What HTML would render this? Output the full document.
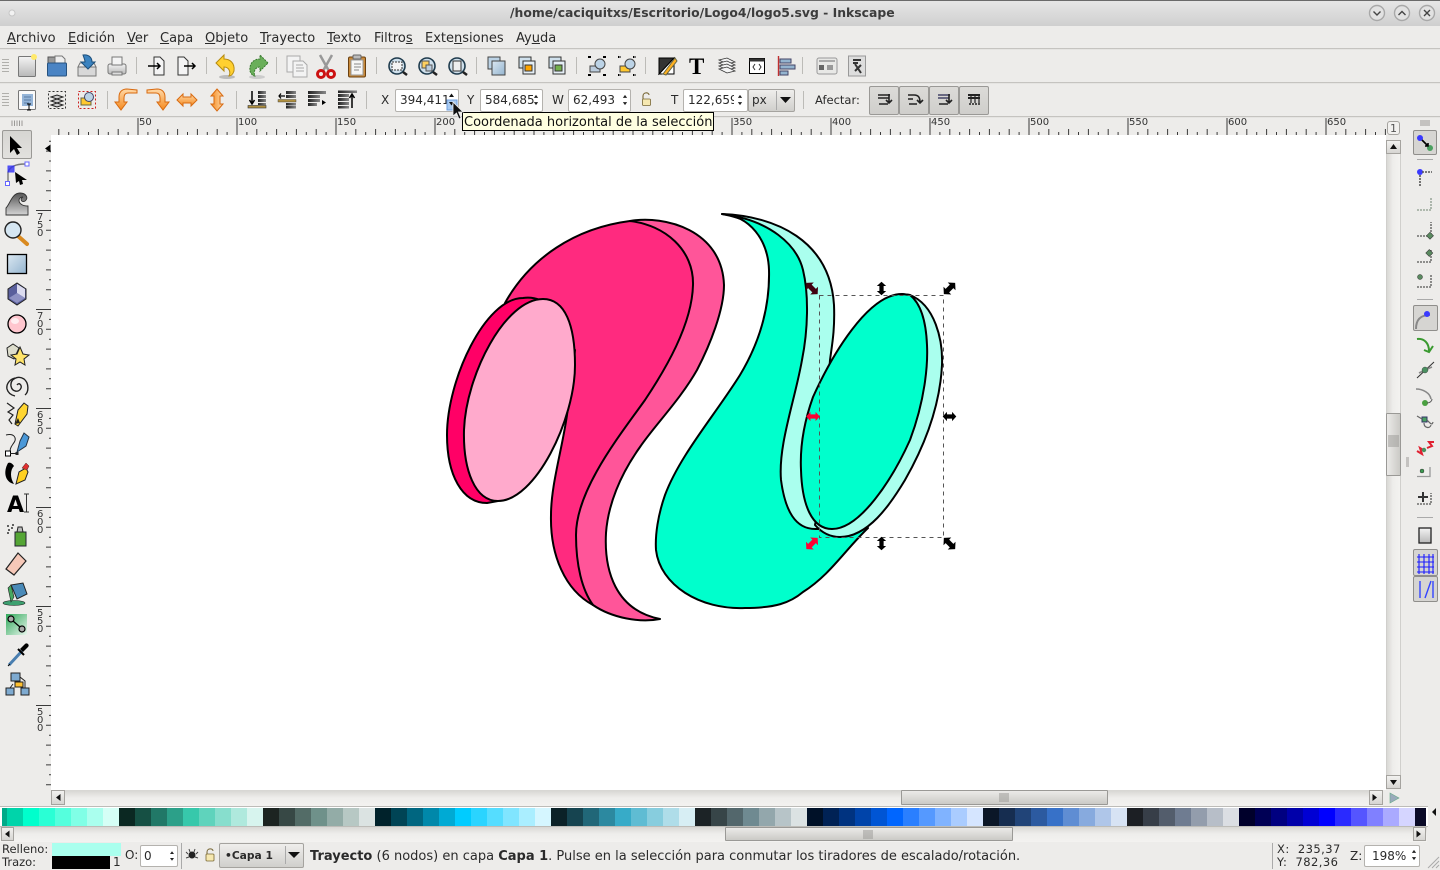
<!DOCTYPE html>
<html><head><meta charset="utf-8"><title>logo5.svg - Inkscape</title>
<style>
html,body{margin:0;padding:0;width:1440px;height:869px;overflow:hidden;background:#edecea;font-family:"DejaVu Sans","Liberation Sans",sans-serif;font-size:13px;color:#2a2a2a}
.a{position:absolute;box-sizing:border-box}
.t{position:absolute;white-space:pre;line-height:16px}
.t u{text-decoration:underline}
.spin{position:absolute;box-sizing:border-box;background:#fff;border:1px solid #b4b2ae;border-radius:2px;height:23px;font-size:12px;line-height:21px;padding-left:4px;overflow:hidden;white-space:pre}
.btn{position:absolute;box-sizing:border-box;border:1px solid #a5a39f;border-radius:2px;background:linear-gradient(#efeeec,#d0cfcc)}
.sb{position:absolute;box-sizing:border-box;background:linear-gradient(#d9d8d5,#eeedeb 45%,#f3f2f0);}
.th{position:absolute;box-sizing:border-box;border:1px solid #9a9996;background:linear-gradient(#ebeae8,#cbcac6);border-radius:1px}
.ar{position:absolute;box-sizing:border-box;border:1px solid #a5a39f;background:linear-gradient(#f2f1ef,#d6d5d2)}
</style></head><body>
<!-- title bar -->
<div class="a" style="left:0;top:0;width:1440px;height:26px;background:linear-gradient(#e6e6e6,#cfcfcf);border-top:1px solid #6a6a6a"></div>
<div class="t" style="left:510px;top:5px;font-weight:bold;font-size:12.4px;color:#3c3c3c">/home/caciquitxs/Escritorio/Logo4/logo5.svg - Inkscape</div>
<!-- menu -->
<div class="t" style="left:7px;top:31px"><u>A</u>rchivo</div>
<div class="t" style="left:68px;top:31px"><u>E</u>dición</div>
<div class="t" style="left:127px;top:31px"><u>V</u>er</div>
<div class="t" style="left:160px;top:31px"><u>C</u>apa</div>
<div class="t" style="left:205px;top:31px"><u>O</u>bjeto</div>
<div class="t" style="left:260px;top:31px"><u>T</u>rayecto</div>
<div class="t" style="left:327px;top:31px"><u>T</u>exto</div>
<div class="t" style="left:374px;top:31px">Filtro<u>s</u></div>
<div class="t" style="left:425px;top:31px">Exte<u>n</u>siones</div>
<div class="t" style="left:516px;top:31px">Ay<u>u</u>da</div>
<!-- bar separators -->
<div class="a" style="left:0;top:48px;width:1440px;height:2px;background:linear-gradient(#b5b3af,#f5f4f2)"></div>
<div class="a" style="left:0;top:82px;width:1440px;height:2px;background:linear-gradient(#b5b3af,#f5f4f2)"></div>
<div class="a" style="left:0;top:116px;width:1440px;height:2px;background:linear-gradient(#b5b3af,#f5f4f2)"></div>
<!-- canvas -->
<div class="a" style="left:51px;top:135px;width:1335px;height:655px;background:#fff"></div>
<!-- scrollbars -->
<div class="sb" style="left:51px;top:790px;width:1332px;height:16px;border-top:1px solid #d8d7d4"></div>
<div class="ar" style="left:51px;top:790px;width:14px;height:15px"></div>
<div class="ar" style="left:1369px;top:790px;width:14px;height:15px"></div>
<div class="th" style="left:901px;top:790px;width:207px;height:15px"></div>
<div class="a" style="left:1386px;top:140px;width:15px;height:648px;background:linear-gradient(90deg,#d9d8d5,#eeedeb 45%,#f3f2f0);border-left:1px solid #d0cfcc;border-right:1px solid #d0cfcc"></div>
<div class="ar" style="left:1386px;top:140px;width:15px;height:14px"></div>
<div class="ar" style="left:1386px;top:775px;width:15px;height:14px"></div>
<div class="th" style="left:1386px;top:413px;width:15px;height:63px;background:linear-gradient(90deg,#ebeae8,#cbcac6)"></div>
<div class="btn" style="left:1387px;top:121px;width:13px;height:14px;border-radius:3px;background:#f2f1ef"></div>
<!-- palette -->
<div class="a" style="left:0;top:806px;width:1428px;height:21px;background:#fff;border-top:1px solid #bdbcb8;border-bottom:1px solid #bdbcb8"></div>
<svg class="a" style="left:0;top:808px" width="1440" height="18" shape-rendering="crispEdges">
<rect x="2" width="5" height="18" fill="#00aa88"/>
<rect x="7" width="16" height="18" fill="#00d4aa"/><rect x="23" width="16" height="18" fill="#00ffcc"/><rect x="39" width="16" height="18" fill="#2affd5"/><rect x="55" width="16" height="18" fill="#55ffdd"/><rect x="71" width="16" height="18" fill="#80ffe6"/><rect x="87" width="16" height="18" fill="#aaffee"/><rect x="103" width="16" height="18" fill="#d5fff6"/>
<rect x="119" width="16" height="18" fill="#0b2822"/><rect x="135" width="16" height="18" fill="#165044"/><rect x="151" width="16" height="18" fill="#217867"/><rect x="167" width="16" height="18" fill="#2ca089"/><rect x="183" width="16" height="18" fill="#37c8ab"/><rect x="199" width="16" height="18" fill="#5fd3bc"/><rect x="215" width="16" height="18" fill="#87decd"/><rect x="231" width="16" height="18" fill="#afe9dd"/><rect x="247" width="16" height="18" fill="#d7f4ee"/>
<rect x="263" width="16" height="18" fill="#1c2421"/><rect x="279" width="16" height="18" fill="#374845"/><rect x="295" width="16" height="18" fill="#536c67"/><rect x="311" width="16" height="18" fill="#6f918a"/><rect x="327" width="16" height="18" fill="#93aca7"/><rect x="343" width="16" height="18" fill="#b7c8c4"/><rect x="359" width="16" height="18" fill="#dbe3e2"/>
<rect x="375" width="16" height="18" fill="#00222b"/><rect x="391" width="16" height="18" fill="#004455"/><rect x="407" width="16" height="18" fill="#006680"/><rect x="423" width="16" height="18" fill="#0088aa"/><rect x="439" width="16" height="18" fill="#00aad4"/><rect x="455" width="16" height="18" fill="#00ccff"/><rect x="471" width="16" height="18" fill="#2ad4ff"/><rect x="487" width="16" height="18" fill="#55ddff"/><rect x="503" width="16" height="18" fill="#80e5ff"/><rect x="519" width="16" height="18" fill="#aaeeff"/><rect x="535" width="16" height="18" fill="#d5f6ff"/>
<rect x="551" width="16" height="18" fill="#0b2228"/><rect x="567" width="16" height="18" fill="#164450"/><rect x="583" width="16" height="18" fill="#216778"/><rect x="599" width="16" height="18" fill="#2c89a0"/><rect x="615" width="16" height="18" fill="#37abc8"/><rect x="631" width="16" height="18" fill="#5fbcd3"/><rect x="647" width="16" height="18" fill="#87cdde"/><rect x="663" width="16" height="18" fill="#afdde9"/><rect x="679" width="16" height="18" fill="#d7eef4"/>
<rect x="695" width="16" height="18" fill="#1c2326"/><rect x="711" width="16" height="18" fill="#374548"/><rect x="727" width="16" height="18" fill="#53676c"/><rect x="743" width="16" height="18" fill="#6f8a91"/><rect x="759" width="16" height="18" fill="#93a7ac"/><rect x="775" width="16" height="18" fill="#b7c4c8"/><rect x="791" width="16" height="18" fill="#dbe2e3"/>
<rect x="807" width="16" height="18" fill="#001128"/><rect x="823" width="16" height="18" fill="#002255"/><rect x="839" width="16" height="18" fill="#003380"/><rect x="855" width="16" height="18" fill="#0044aa"/><rect x="871" width="16" height="18" fill="#0055d4"/><rect x="887" width="16" height="18" fill="#0066ff"/><rect x="903" width="16" height="18" fill="#2a7fff"/><rect x="919" width="16" height="18" fill="#5599ff"/><rect x="935" width="16" height="18" fill="#80b3ff"/><rect x="951" width="16" height="18" fill="#aaccff"/><rect x="967" width="16" height="18" fill="#d5e5ff"/>
<rect x="983" width="16" height="18" fill="#0b1728"/><rect x="999" width="16" height="18" fill="#162d50"/><rect x="1015" width="16" height="18" fill="#214478"/><rect x="1031" width="16" height="18" fill="#2c5aa0"/><rect x="1047" width="16" height="18" fill="#3771c8"/><rect x="1063" width="16" height="18" fill="#5f8dd3"/><rect x="1079" width="16" height="18" fill="#87aade"/><rect x="1095" width="16" height="18" fill="#afc6e9"/><rect x="1111" width="16" height="18" fill="#d7e3f4"/>
<rect x="1127" width="16" height="18" fill="#1c1f24"/><rect x="1143" width="16" height="18" fill="#373e48"/><rect x="1159" width="16" height="18" fill="#535d6c"/><rect x="1175" width="16" height="18" fill="#6f7c91"/><rect x="1191" width="16" height="18" fill="#939dac"/><rect x="1207" width="16" height="18" fill="#b7bec8"/><rect x="1223" width="16" height="18" fill="#dbdee3"/>
<rect x="1239" width="16" height="18" fill="#00002b"/><rect x="1255" width="16" height="18" fill="#000055"/><rect x="1271" width="16" height="18" fill="#000080"/><rect x="1287" width="16" height="18" fill="#0000aa"/><rect x="1303" width="16" height="18" fill="#0000d4"/><rect x="1319" width="16" height="18" fill="#0000ff"/><rect x="1335" width="16" height="18" fill="#2a2aff"/><rect x="1351" width="16" height="18" fill="#5555ff"/><rect x="1367" width="16" height="18" fill="#8080ff"/><rect x="1383" width="16" height="18" fill="#aaaaff"/><rect x="1399" width="16" height="18" fill="#d5d5ff"/>
<rect x="1415" width="11" height="18" fill="#0b0b28"/>
</svg>
<div class="sb" style="left:0;top:827px;width:1427px;height:15px"></div>
<div class="ar" style="left:1px;top:827px;width:13px;height:14px"></div>
<div class="ar" style="left:1413px;top:827px;width:13px;height:14px"></div>
<div class="th" style="left:725px;top:827px;width:288px;height:14px"></div>
<!-- status -->
<div class="t" style="left:2px;top:841px;font-size:11.5px">Relleno:</div>
<div class="t" style="left:2px;top:854px;font-size:11.5px">Trazo:</div>
<div class="a" style="left:52px;top:843px;width:69px;height:13px;background:#aaffee"></div>
<div class="a" style="left:52px;top:856px;width:58px;height:13px;background:#000"></div>
<div class="t" style="left:113px;top:854px;font-size:12px">1</div>
<div class="t" style="left:125px;top:847px;font-size:12px">O:</div>
<div class="spin" style="left:140px;top:845px;width:38px;height:22px;padding-left:3px">0</div>
<div class="a" style="left:181px;top:843px;width:1px;height:26px;background:#aaa"></div>
<div class="btn" style="left:219px;top:843px;width:85px;height:25px"></div>
<div class="a" style="left:285px;top:846px;width:1px;height:18px;background:#aaa"></div>
<div class="t" style="left:225px;top:848px;font-size:10.7px;font-weight:bold">•Capa 1</div>
<div class="t" style="left:310px;top:849px;font-size:13px"><b>Trayecto</b> (6 nodos) en capa <b>Capa 1</b>. Pulse en la selección para conmutar los tiradores de escalado/rotación.</div>
<div class="a" style="left:1272px;top:843px;width:1px;height:26px;background:#aaa"></div>
<div class="t" style="left:1277px;top:841px;font-size:11.5px;letter-spacing:.45px">X:  235,37</div>
<div class="t" style="left:1277px;top:854px;font-size:11.5px;letter-spacing:.45px">Y:  782,36</div>
<div class="t" style="left:1350px;top:848px;font-size:12px">Z:</div>
<div class="spin" style="left:1364px;top:845px;width:56px;height:22px;padding-left:7px">198%</div>
<!-- spin fields bar -->
<div class="t" style="left:381px;top:92px;font-size:12px">X</div>
<div class="spin" style="left:395px;top:89px;width:64px">394,411</div>
<div class="t" style="left:467px;top:92px;font-size:12px">Y</div>
<div class="spin" style="left:480px;top:89px;width:63px">584,685</div>
<div class="t" style="left:552px;top:92px;font-size:12px">W</div>
<div class="spin" style="left:568px;top:89px;width:63px">62,493</div>
<div class="t" style="left:671px;top:92px;font-size:12px">T</div>
<div class="spin" style="left:683px;top:89px;width:65px">122,659</div>
<div class="btn" style="left:748px;top:89px;width:47px;height:23px"></div>
<div class="a" style="left:776px;top:91px;width:1px;height:19px;background:#aaa"></div>
<div class="t" style="left:752px;top:92px;font-size:12px">px</div>
<div class="t" style="left:815px;top:92px;font-size:11.5px">Afectar:</div>
<div class="btn" style="left:869px;top:86px;width:30px;height:29px;background:linear-gradient(#dcdbd8,#cfcecb);border-color:#9a9996"></div>
<div class="btn" style="left:899px;top:86px;width:30px;height:29px;background:linear-gradient(#dcdbd8,#cfcecb);border-color:#9a9996"></div>
<div class="btn" style="left:929px;top:86px;width:30px;height:29px;background:linear-gradient(#dcdbd8,#cfcecb);border-color:#9a9996"></div>
<div class="btn" style="left:959px;top:86px;width:30px;height:29px;background:linear-gradient(#dcdbd8,#cfcecb);border-color:#9a9996"></div>
<!-- toolbox active -->
<div class="btn" style="left:2px;top:130px;width:30px;height:29px;background:linear-gradient(#d6d5d2,#e2e1de);border-color:#9a9996"></div>
<div class="btn" style="left:1413px;top:130px;width:24px;height:25px;background:#d6d5d2;border-color:#8f8e8b"></div>
<div class="btn" style="left:1413px;top:305px;width:25px;height:26px;background:#d6d5d2;border-color:#8f8e8b"></div>
<div class="btn" style="left:1413px;top:549px;width:25px;height:27px;background:#d6d5d2;border-color:#8f8e8b"></div>
<div class="btn" style="left:1413px;top:576px;width:25px;height:26px;background:#d6d5d2;border-color:#8f8e8b"></div>
<!-- all graphic -->
<svg class="a" style="left:0;top:0" width="1440" height="869" xmlns="http://www.w3.org/2000/svg">
<defs>
<linearGradient id="gB" x1="0" y1="0" x2="1" y2="1"><stop offset="0" stop-color="#dbe8f2"/><stop offset="1" stop-color="#94b4cf"/></linearGradient>
<linearGradient id="gG" x1="0" y1="0" x2="0" y2="1"><stop offset="0" stop-color="#f4f4f4"/><stop offset="1" stop-color="#b8b8b8"/></linearGradient>
<linearGradient id="gO" x1="0" y1="0" x2="0" y2="1"><stop offset="0" stop-color="#ffd9a8"/><stop offset="1" stop-color="#f58a1f"/></linearGradient>
<linearGradient id="gL" x1="0" y1="0" x2="0" y2="1"><stop offset="0" stop-color="#555"/><stop offset="1" stop-color="#d4d4d4"/></linearGradient>
<linearGradient id="gH" x1="0" y1="0" x2="1" y2="0"><stop offset="0" stop-color="#222"/><stop offset="1" stop-color="#888"/></linearGradient>
<linearGradient id="gGr" x1="0" y1="0" x2="1" y2="1"><stop offset="0" stop-color="#2fa85a"/><stop offset="1" stop-color="#e8f5ec"/></linearGradient>
<pattern id="hr" patternUnits="userSpaceOnUse" x="38.5" y="118" width="99" height="17">
<path d="M.5 0V17M10.4 14V17M20.3 11V17M30.2 14V17M40.1 11V17M50 14V17M59.9 11V17M69.8 14V17M79.7 11V17M89.6 14V17" stroke="#3a3a3a" stroke-width="1" fill="none"/></pattern>
<pattern id="vr" patternUnits="userSpaceOnUse" x="36" y="111" width="15" height="99">
<path d="M0 .5H15M13 10.4H15M10 20.3H15M13 30.2H15M10 40.1H15M13 50H15M10 59.9H15M13 69.8H15M10 79.7H15M13 89.6H15" stroke="#3a3a3a" stroke-width="1" fill="none"/></pattern>
<g id="h"><path d="M-8 0L-3-5.500V-2.500H3V-5.500L8 0L3 5.500V2.500H-3V5.500Z"/></g>
<g id="sp"><path d="M-2.5-2.5L0-6L2.5-2.5ZM-2.5 2.5L0 6L2.5 2.5Z" fill="#222"/></g>
<g id="gr"><path d="M0 .5H7M0 3.5H7M0 6.5H7M0 9.5H7M0 12.5H7" stroke="#b0afab" stroke-width="1"/></g>
</defs>
<!-- rulers -->
<rect x="51" y="118" width="1335" height="17" fill="url(#hr)"/>
<rect x="36" y="135" width="15" height="655" fill="url(#vr)"/>
<g font-family="'DejaVu Sans',sans-serif" font-size="10" fill="#333">
<text x="139" y="125">50</text><text x="238" y="125">100</text><text x="337" y="125">150</text><text x="436" y="125">200</text><text x="733" y="125">350</text><text x="832" y="125">400</text><text x="931" y="125">450</text><text x="1030" y="125">500</text><text x="1129" y="125">550</text><text x="1228" y="125">600</text><text x="1327" y="125">650</text>
<text x="37" y="220">7</text><text x="37" y="228">5</text><text x="37" y="236">0</text>
<text x="37" y="319">7</text><text x="37" y="327">0</text><text x="37" y="335">0</text>
<text x="37" y="418">6</text><text x="37" y="426">5</text><text x="37" y="434">0</text>
<text x="37" y="517">6</text><text x="37" y="525">0</text><text x="37" y="533">0</text>
<text x="37" y="616">5</text><text x="37" y="624">5</text><text x="37" y="632">0</text>
<text x="37" y="715">5</text><text x="37" y="723">0</text><text x="37" y="731">0</text>
</g>
<path d="M45 148.5L50.5 144.5V152.5Z" fill="#000"/>
<!-- artwork -->
<g stroke="#000" stroke-width="2" stroke-linejoin="round">
<path fill="#ff5599" d="M630 221C665 215 722 230 724 285C724 310 710 345 697 370C680 400 655 425 640 447C620 475 608 505 606 533C604 570 615 610 660 619C640 623 612 618 593 605C578 590 570 565 570 535L600 400Z"/>
<path fill="#ff2a7f" d="M630 221C665 225 694 250 693 285C692 325 665 370 645 400C620 435 576 490 576 535C576 565 582 590 593 605C565 590 550 555 551 515C551 485 562 450 567 415L575 350L505 303C530 258 575 228 630 221Z"/>
<path fill="#ff0066" d="M523 298C485 298 447 380 447 435C447 475 462 503 487 503L498 501L540 300C535 298 530 297 523 298Z"/>
<path fill="#ffaacc" d="M543 299C565 299 575 325 575 365C575 420 535 501 498 501C475 501 463 470 464 430C466 375 505 299 543 299Z"/>
<path fill="#aaffee" d="M722 214C775 216 830 240 834 305C835 330 832 345 830 360L818 531L790 525L775 480L775 440L790 360L795 290L792 270C785 245 765 222 722 214Z"/>
<path fill="#00ffcc" d="M722 214C750 216 768 240 769 270C770 310 758 345 740 375C715 415 680 455 665 495C658 515 655 535 656 550C660 585 700 610 745 608C775 608 790 603 803 592C830 575 845 550 868 528L817 529C795 530 785 510 781 480C778 445 795 400 802 360C808 330 809 295 803 270C797 245 770 220 722 214Z"/>
<path fill="#aaffee" d="M910 295C935 305 943 340 942 365C940 405 925 445 905 480C890 505 868 537 840 537C830 537 822 533 815 525L840 400L902 294Z"/>
<path fill="#00ffcc" d="M902 294C868 294 832 355 813 397C803 425 800 450 801 470C802 505 812 529 832 529C860 529 892 480 910 440C925 400 928 365 927 345C926 320 920 303 910 295Z"/>
</g>
<rect x="819.5" y="295.5" width="124" height="242" fill="none" stroke="#555" stroke-dasharray="4 4"/>
<use href="#h" transform="translate(812 288.5) rotate(45)" fill="#40000f"/>
<use href="#h" transform="translate(881.5 288.5) rotate(90) scale(.85)"/>
<use href="#h" transform="translate(949.5 288.5) rotate(-45)"/>
<use href="#h" transform="translate(813 416.5) scale(.85)" fill="#ff0033"/>
<use href="#h" transform="translate(949.5 416.5) scale(.85)"/>
<use href="#h" transform="translate(812 543.5) rotate(-45)" fill="#ff0033"/>
<use href="#h" transform="translate(881.5 543.5) rotate(90) scale(.85)"/>
<use href="#h" transform="translate(949.5 543.5) rotate(45)"/>
<!-- window buttons -->
<g fill="#e2e2e2" stroke="#a8a8a8" stroke-width="1.4"><circle cx="1377" cy="13" r="7.5"/><circle cx="1402" cy="13" r="7.5"/><circle cx="1427" cy="13" r="7.5"/></g>
<path d="M1373.5 11.5L1377 15L1380.5 11.5M1398.5 15L1402 11.5L1405.5 15M1424 10L1430 16M1430 10L1424 16" stroke="#444" stroke-width="1.4" fill="none"/>
<circle cx="12" cy="13" r="3" fill="#f2f2f2" stroke="#c6c6c6"/>
<!-- grips -->
<use href="#gr" transform="translate(2 59)"/><use href="#gr" transform="translate(2 93)"/>
<path d="M12 120.5V126M14.5 120.5V126M17 120.5V126M19.5 120.5V126M22 120.5V126M1421 120V126M1423 120V126M1425 120V126M1427 120V126M1429 120V126M1406 458H1409M1406 460H1409M1406 462H1409M1406 464H1409M1406 466H1409" stroke="#9a9996"/>
<!-- toolbar separators -->
<path d="M136.5 57V74M206.5 57V74M276.5 57V74M376.5 57V74M476.5 57V74M576.5 57V74M645.5 57V74M802.5 57V74M107.5 91V109M236.5 91V109M366.5 91V109M803.5 91V109" stroke="#bcbbb7"/>
<path d="M1417 159.5H1433M1417 299.5H1433M1417 517.5H1433" stroke="#aaa"/>
<!-- commands row -->
<g transform="translate(27 66)"><rect x="-8.5" y="-9.5" width="17" height="20" rx="1" fill="url(#gG)" stroke="#777"/><circle cx="7" cy="-9" r="3" fill="#ffe96b"/></g>
<g transform="translate(57 66)"><path d="M-9-1V-9H-2L0-6H3V-1Z" fill="#999" stroke="#555"/><path d="M-2-10H5L8-7V0H-2Z" fill="#eee" stroke="#777"/><rect x="-9.5" y="-3" width="19" height="13" rx="1" fill="#4a84c4" stroke="#26527f"/></g>
<g transform="translate(87 66)"><path d="M-9 1H9V10H-9Z" fill="#d8d8d8" stroke="#777"/><path d="M-7-3H7L9 1H-9Z" fill="#eee" stroke="#777"/><path d="M-4-11C3-12 5-7 5-4H8L1 3L-6-4H-2C-2-6-3-8-4-11Z" fill="#3b83c0" stroke="#1d4f7a"/></g>
<g transform="translate(117 66)" stroke="#777"><rect x="-9" y="-2" width="18" height="10" rx="2" fill="url(#gG)"/><rect x="-5" y="-9" width="10" height="8" fill="#f4f4f4"/><rect x="-5" y="6" width="10" height="3" fill="#ddd"/></g>
<g transform="translate(157 66)"><path d="M-3-9H3L7-5V9H-3Z" fill="#f4f4f4" stroke="#333"/><path d="M-9 0H3M0-3L3 0L0 3" stroke="#000" fill="none" stroke-width="1.5"/></g>
<g transform="translate(186 66)"><path d="M-8-9H-2L2-5V9H-8Z" fill="#f4f4f4" stroke="#333"/><path d="M-2 0H9M6-3L9 0L6 3" stroke="#000" fill="none" stroke-width="1.5"/></g>
<g transform="translate(226 66)"><ellipse cx="1" cy="11" rx="8" ry="2" fill="#bbb"/><path d="M-10-3L-2-11V-7C4-7 9-3 8 5C7 8 5 10 3 10C5 6 3 1-2 1V5Z" fill="#ffd030" stroke="#b58a10"/></g>
<g transform="translate(258 66)"><ellipse cx="-1" cy="11" rx="8" ry="2" fill="#ccc"/><path d="M10-3L2-11V-7C-4-7-9-3-8 5C-7 8-5 10-3 10C-5 6-3 1 2 1V5Z" fill="#6aaf5a" stroke="#3a7a30" stroke-dasharray="2 1"/></g>
<g transform="translate(297 66)" stroke="#aaa" fill="#f3f3f3"><rect x="-10" y="-10" width="13" height="16"/><path d="M-4-5H6L10-1V11H-4Z"/><path d="M-1-1H6M-1 2H7M-1 5H7" fill="none"/></g>
<g transform="translate(326 66)"><path d="M-6-11L3 5M6-11L-3 5" stroke="#999" stroke-width="2.5"/><circle cx="-5" cy="8" r="3.5" fill="none" stroke="#cc1111" stroke-width="3"/><circle cx="5" cy="8" r="3.5" fill="none" stroke="#cc1111" stroke-width="3"/></g>
<g transform="translate(357 66)"><rect x="-8.5" y="-9" width="17" height="20" rx="1.5" fill="#c98a3a" stroke="#6a4010"/><rect x="-6" y="-6" width="12" height="15" fill="#f6f6f6" stroke="#999"/><rect x="-4" y="-11" width="8" height="4" rx="1" fill="#bbb" stroke="#666"/><path d="M-3-2H4M-3 1H4M-3 4H2" stroke="#888"/></g>
<g id="zm" transform="translate(397 66)"><circle r="8" fill="#cfe0ec" stroke="#1f3b4d" stroke-width="1.6"/><rect x="-5" y="-4" width="10" height="8" fill="#f4f4f4" stroke="#333" stroke-dasharray="2 1"/><path d="M6 6L10 9" stroke="#222" stroke-width="2.5"/></g>
<g transform="translate(427 66)"><circle r="8" fill="#cfe0ec" stroke="#1f3b4d" stroke-width="1.6"/><rect x="-5" y="-5" width="7" height="7" fill="#ffd060" stroke="#555"/><rect x="-1" y="-1" width="6" height="6" fill="#bcd" stroke="#555"/><path d="M6 6L10 9" stroke="#222" stroke-width="2.5"/></g>
<g transform="translate(457 66)"><circle r="8" fill="#cfe0ec" stroke="#1f3b4d" stroke-width="1.6"/><rect x="-4" y="-5" width="8" height="10" fill="#eee" stroke="#333"/><path d="M6 6L10 9" stroke="#222" stroke-width="2.5"/></g>
<g transform="translate(497 66)" stroke="#444"><rect x="-9" y="-9" width="12" height="12" fill="#bcd3e6"/><rect x="-5" y="-5" width="13" height="14" fill="url(#gB)"/></g>
<g transform="translate(527 66)" stroke="#333"><rect x="-8" y="-9" width="12" height="11" fill="#cfe0ec"/><rect x="-4" y="-5" width="12" height="13" fill="#e4eef5"/><rect x="-2" y="-1" width="7" height="6" fill="#ffa500"/></g>
<g transform="translate(557 66)" stroke="#333"><rect x="-8" y="-9" width="12" height="11" fill="#cfe0ec"/><rect x="-4" y="-5" width="12" height="13" fill="#e4eef5"/><rect x="-2" y="-1" width="7" height="6" fill="#74b04c"/></g>
<g transform="translate(597 66)"><path d="M-9-9H-6M6-9H9M-9 9H-6M6 9H9" stroke="#000" stroke-width="2"/><rect x="-7" y="0" width="10" height="6" fill="#bcd" stroke="#444"/><circle cx="3" cy="-2" r="5" fill="#bcd3e6" stroke="#444"/></g>
<g transform="translate(627 66)"><path d="M-9-9H-6M6-9H9M-9 9H-6M6 9H9" stroke="#000" stroke-width="2" stroke-dasharray="1.5 1"/><rect x="-7" y="0" width="10" height="6" fill="#ffc830" stroke="#444"/><circle cx="3" cy="-2" r="5" fill="#bcd3e6" stroke="#444"/></g>
<g transform="translate(667 66)"><path d="M-8 8L7-8V8Z" fill="#fff" stroke="#000"/><path d="M-8 8V-8H7Z" fill="#333" stroke="#000"/><path d="M-4 8L8-8L10-5L-1 9Z" fill="#ffb020" stroke="#664"/></g>
<text x="689" y="74" font-family="'Liberation Serif',serif" font-weight="bold" font-size="23" fill="#000">T</text>
<g transform="translate(727 66)" fill="#f4f4f4" stroke="#333" stroke-width=".8"><path d="M-8-6L0-8L8-4L0-2Z"/><path d="M-8-3L0-5L8-1L0 1Z"/><path d="M-8 0L0-2L8 2L0 4Z"/><path d="M-8 3L0 1L8 5L0 7Z"/></g>
<g transform="translate(757 66)"><rect x="-7.5" y="-7.5" width="15" height="15" fill="#fff" stroke="#000"/><rect x="-7.5" y="-7.5" width="15" height="3" fill="#333"/><path d="M-2-2L-4 1L-2 4M2-2L4 1L2 4" stroke="#333" fill="none"/></g>
<g transform="translate(787 66)"><path d="M-8.5-10V10" stroke="#c03030" stroke-width="1.4"/><rect x="-7" y="-7" width="11" height="4" fill="#94b4cf" stroke="#446"/><rect x="-7" y="-1" width="15" height="4" fill="#94b4cf" stroke="#446"/><rect x="-7" y="5" width="8" height="4" fill="#94b4cf" stroke="#446"/></g>
<g transform="translate(827 66)"><rect x="-10" y="-8" width="20" height="16" rx="2" fill="#e8e8e6" stroke="#999"/><rect x="-8" y="-1" width="5" height="5" fill="#666"/><rect x="0" y="-1" width="6" height="5" fill="#999"/><path d="M-8-5H8" stroke="#aaa" stroke-width="2"/></g>
<g transform="translate(857 66)"><rect x="-8.5" y="-10" width="17" height="20" fill="#ddd" stroke="#999"/><path d="M-4-6H4M-4-3H1M4 7L-2-2M-2 5L4-1" stroke="#333" stroke-width="2"/></g>
<!-- row 2 -->
<g transform="translate(27 100)"><rect x="-8.5" y="-9.5" width="17" height="19" rx="1" fill="#fafafa" stroke="#777"/><rect x="-5" y="-6" width="11" height="12" fill="#94b4d8"/><path d="M-3-3H4M-3 0H4M-3 3H2" stroke="#5a7ca4"/><path d="M2 4V10M0 4H4M0 10H4" stroke="#000"/></g>
<g transform="translate(57 100)"><rect x="-8.5" y="-8.5" width="17" height="17" fill="none" stroke="#333" stroke-dasharray="2 2"/><path d="M-6-3L0-5L6-3L0-1ZM-6 1L0-1L6 1L0 3ZM-6 5L0 3L6 5L0 7Z" fill="#cfcfcf" stroke="#222"/></g>
<g transform="translate(87 100)"><rect x="-8.5" y="-8.5" width="17" height="17" fill="none" stroke="#cc2020" stroke-dasharray="2 2"/><rect x="-6" y="-2" width="10" height="7" fill="#ffc830" stroke="#664"/><circle cx="2" cy="-3" r="4.5" fill="#bcd3e6" stroke="#446"/></g>
<g fill="url(#gO)" stroke="#d86a10">
<path transform="translate(127 100)" d="M10-10V-7H1C-2-7-3-5-3-2V2H0L-6 10L-12 2H-8V-3C-8-8-5-11 0-11Z"/>
<path transform="translate(157 100)" d="M-10-10V-7H-1C2-7 3-5 3-2V2H0L6 10L12 2H8V-3C8-8 5-11 0-11Z"/>
<path transform="translate(187 100)" d="M-10 0L-4-6V-3H4V-6L10 0L4 6V3H-4V6Z"/>
<path transform="translate(217 100) rotate(90)" d="M-11 0L-4-6V-3H4V-6L11 0L4 6V3H-4V6Z"/>
</g>
<!-- align icons -->
<g fill="url(#gH)">
<rect x="258" y="91" width="8" height="3"/><rect x="258" y="95" width="8" height="3"/><rect x="258" y="99" width="8" height="3"/><rect x="258" y="103" width="8" height="2"/>
<rect x="286" y="91" width="10" height="3"/><rect x="286" y="95" width="10" height="3"/><rect x="286" y="103" width="10" height="2.500"/><rect x="286" y="106" width="10" height="2.500"/>
<rect x="308" y="91" width="18" height="3"/><rect x="308" y="95" width="12" height="3"/><rect x="308" y="99" width="12" height="3"/><rect x="308" y="103" width="9" height="3"/>
<rect x="338" y="90.500" width="19" height="2.500"/><rect x="338" y="94" width="11" height="3"/><rect x="338" y="98" width="11" height="3"/><rect x="338" y="102" width="11" height="3"/><rect x="338" y="106" width="11" height="2.500"/>
</g>
<path d="M252 91V103M249.500 100L252 104L254.500 100" stroke="#000" fill="none" stroke-width="1.5"/><rect x="248" y="105.500" width="18" height="2.500" fill="#b09040" stroke="#333" stroke-width=".6"/>
<rect x="278" y="99.500" width="18" height="2.500" fill="#b09040" stroke="#333" stroke-width=".4"/><path d="M279 96H285M281 93.500L279 96L281 98.500" stroke="#000" fill="none" stroke-width="1.200"/>
<path d="M322 100L326 102.500L322 105Z" fill="#000"/>
<path d="M352 108V95M349.500 98L352 94L354.500 98" stroke="#000" fill="none" stroke-width="1.5"/>
<!-- spin arrows -->
<rect x="447" y="100" width="10" height="10" fill="#a9cbf2" stroke="#6d9fe0"/>
<path d="M449 97L451.5 93.5L454 97ZM449 102L451.5 105.5L454 102Z" fill="#111"/>
<rect x="734" y="91" width="3" height="19" fill="#fff"/>
<use href="#sp" transform="translate(536 100) scale(.85)"/><use href="#sp" transform="translate(625 100) scale(.85)"/><use href="#sp" transform="translate(740 100) scale(.85)"/>
<path d="M780 97H791L785.5 103Z" fill="#111"/>
<path d="M643 99V96C643 92 649 92 649 95" fill="none" stroke="#776633" stroke-width="1.100"/><rect x="642.500" y="99" width="8" height="6.500" rx="1" fill="#f6e8b0" stroke="#776633" stroke-width=".8"/>
<!-- afectar icons -->
<g fill="none" stroke="#222" stroke-width="1.6">
<path d="M878 95H890M878 98H889M889 94V103M886 100L889 103L892 100M879 104H888" />
<path d="M908 95H914C919 95 920 98 920 103M917 100L920 103L923 100M908 99H913M909 104H917"/>
<path d="M938 95H950M938 98H949" stroke="#446"/><path d="M949 94V103M946 100L949 103L952 100M939 104H948"/>
<path d="M968 95H980M968 98H980" stroke-width="2"/><path d="M971 94V103M975 94V103M979 94V103" stroke-width="1.2"/><path d="M969 104H981" stroke-dasharray="2 1"/>
</g>
<!-- tooltip + cursor -->
<rect x="462.5" y="112.5" width="251" height="18" fill="#ffffe1" stroke="#000"/>
<text x="464" y="126" font-family="'DejaVu Sans',sans-serif" font-size="13" fill="#111">Coordenada horizontal de la selección</text>
<path d="M453 102V116L456.5 113L459 119L461 118L458.5 112H463Z" fill="#111" stroke="#eee" stroke-width=".8"/>
<!-- left tools -->
<g transform="translate(15 145)"><path d="M-5-9L-5 8L-1 4L2 10L5 8L2 3L7 3Z" fill="#000"/></g>
<path d="M8 182V172Q11 164 25 164" fill="none" stroke="#777" stroke-width="1.4"/><rect x="8" y="166" width="6" height="6" fill="#3333ee" opacity=".8" stroke="#22f"/><rect x="25" y="162" width="4" height="4" fill="#fff" stroke="#66f"/><rect x="5.500" y="181.500" width="4" height="4" fill="#fff" stroke="#66f"/><path d="M15 172L27 180L22 180L23 184L20 185L19 181L16 183Z" fill="#000"/>
<path d="M6 215V208C10 204 12 193 20 193C26 193 29 198 25 201C22 203 19 199 23 197C17 197 17 206 28 206V215Z" fill="url(#gL)" stroke="#333" stroke-width=".9"/>
<g transform="translate(15 232)"><path d="M3 4L12 12" stroke="#d98a20" stroke-width="4" stroke-linecap="round"/><circle cx="-2" cy="-2" r="8" fill="#d5e6f2" stroke="#222" stroke-width="1.4"/></g>
<g transform="translate(17 264)"><rect x="-9.5" y="-9.5" width="19" height="19" fill="url(#gB)" stroke="#000" stroke-width="1.3"/></g>
<g transform="translate(17 294)"><path d="M-9-5L0-11L9-5V5L0 11L-9 5Z" fill="#5a5f9c" stroke="#222"/><path d="M0-10L8-5V4L0-1Z" fill="#dcdcf0"/><path d="M0-1L8 4L0 9L-8 4Z" fill="#8f92c4"/></g>
<g transform="translate(17 324)"><circle r="9" fill="#ffc6ce" stroke="#000" stroke-width="1.3"/><ellipse cx="-2" cy="-3" rx="4" ry="3" fill="#fff" opacity=".7"/></g>
<g transform="translate(16 354)"><path d="M-9-6L-3-10L3-6L-2 5L-8 2Z" fill="#ddc" stroke="#222"/><path d="M4-7L7 0L13 1L8 5L9 11L4 8L-1 11L0 5L-5 1L1 0Z" fill="#ffe46a" stroke="#222"/></g>
<path d="M17 385C19 382 22 385 21 388C19 393 12 392 11 386C10 379 18 375 24 379C29 383 29 392 25 395" fill="none" stroke="#222" stroke-width="1.400"/><path d="M15 378C10 379 6 384 7 389C8 393 11 395 15 396" fill="none" stroke="#222" stroke-width="1.400"/>
<path d="M7 403L14 408L8 412L13 415L9 420L12 424" fill="none" stroke="#222" stroke-width="1.200"/><path d="M15 424L18 410L24 403L28 406L27 414L18 426Z" fill="#ffd530" stroke="#222"/><path d="M15 424L18 418L20 423Z" fill="#222"/>
<path d="M6 435C14 433 18 438 13 444C10 448 10 450 10 453" fill="none" stroke="#222"/><rect x="5.500" y="451" width="5" height="5" fill="#fff" stroke="#000"/><path d="M10 453.500H17" stroke="#222"/><rect x="15.500" y="452" width="3" height="3" fill="#222"/><path d="M17 452L20 441L24 433L29 437L26 446Z" fill="#4a98d8" stroke="#234"/>
<path d="M8 463C3 472 5 482 14 484C10 478 10 470 14 466C12 463 10 462 8 463Z" fill="#000"/><path d="M16 484L19 472L26 468L28 472L25 480Z" fill="#ffd020" stroke="#222"/><path d="M22 468L26 463L29 466L27 470Z" fill="#e03030" stroke="#422" stroke-width=".5"/>
<text x="7" y="512" font-family="'DejaVu Sans',sans-serif" font-weight="bold" font-size="22" fill="#000">A</text>
<path d="M26.5 494V512M24 494H29M24 512H29" stroke="#333"/>
<g transform="translate(17 534)"><path d="M-2-2H9V12H-2Z" fill="#55a535" stroke="#223"/><path d="M1-7L5-7L6-2H0Z" fill="#bbb" stroke="#222"/><path d="M-10-8H-8M-6-6H-4M-9-4H-7M-5-9H-3M-10-1H-8" stroke="#333" stroke-width="1.6"/></g>
<g transform="translate(16 564)"><path d="M-10 5L2-11L10-3L-2 11Z" fill="#f6c8b8" stroke="#222" stroke-width="1.2"/></g>
<g transform="translate(16 594)"><ellipse cx="-2" cy="9" rx="11" ry="2.5" fill="#3da070" stroke="#222" stroke-width=".6"/><path d="M-5-9L7-11L11 0L1 5Z" fill="#4a8ab8" stroke="#222"/><path d="M-8-6L-5-9L-2 3L-5 8Z" fill="#46a860" stroke="#222" stroke-width=".6"/></g>
<g transform="translate(16 624)"><rect x="-10" y="-10" width="21" height="21" fill="url(#gGr)"/><circle cx="-5" cy="-5" r="3" fill="#aaa" stroke="#000" stroke-width="1.2"/><circle cx="6" cy="5" r="3" fill="#aaa" stroke="#000" stroke-width="1.2"/><path d="M-3-3L4 3" stroke="#000" stroke-width="1.3"/></g>
<g transform="translate(17 654)"><path d="M-8 11L5-3" stroke="#4a7fb0" stroke-width="3"/><path d="M-9 12L-7 10" stroke="#000" stroke-width="1"/><path d="M3-5L8-10C10-12 13-9 11-7L6-2Z" fill="#000"/><path d="M1-5L7 1" stroke="#000" stroke-width="2"/></g>
<g transform="translate(17 684)" stroke="#222"><rect x="-6" y="-11" width="9" height="8" fill="#7eaad0"/><rect x="-2" y="-2" width="8" height="5" fill="#ffc030"/><rect x="-11" y="4" width="8" height="7" fill="#7eaad0"/><rect x="4" y="4" width="8" height="7" fill="#7eaad0"/><path d="M3-7L8-3V4M-4 0L-7 4" fill="none"/></g>
<!-- right snapping bar -->
<g transform="translate(1425 143)"><circle cx="-5" cy="-5" r="3" fill="#3a3aff"/><circle cx="5" cy="5" r="3" fill="#4aa060"/><path d="M-3-3L3 3M0 3H3V0" stroke="#000" stroke-width="1.6" fill="none"/></g>
<g transform="translate(1425 177)"><circle cx="-5" cy="-5" r="3" fill="#3a3aff"/><path d="M-3-5H7M-5-2V9" stroke="#555" stroke-width="1.6" stroke-dasharray="2 1"/></g>
<g fill="none" stroke="#555" stroke-width="1.3" stroke-dasharray="2 1">
<path d="M1417 210H1431V197" stroke="#8a9a8a"/><path d="M1417 236H1431V222"/><path d="M1417 262H1431V250"/><path d="M1431 275V287H1417"/>
<path d="M1417 476.5H1430V467" stroke-dasharray="none" stroke="#999"/><path d="M1417 504H1431V493"/>
</g>
<g fill="#5a8a60" stroke="#333" stroke-width=".5"><rect x="1428" y="233" width="5" height="5" transform="rotate(45 1430 235)"/><rect x="1427" y="251" width="5" height="5" transform="rotate(45 1430 253)"/><circle cx="1420" cy="277" r="2.5"/></g>
<g transform="translate(1425 318)"><path d="M-9 9C-9-1-4-5 5-5" fill="none" stroke="#888" stroke-width="2" transform="translate(0 2)"/><circle cx="2" cy="-4" r="3" fill="#3a3aff"/></g>
<path d="M1417 339C1424 338 1429 343 1429 351M1424 350L1429 352L1433 346" stroke="#3a9a30" stroke-width="2" fill="none"/>
<g transform="translate(1425 370)"><path d="M-8 8L9-8" stroke="#333"/><path d="M-6 3C-2 1 2-1 7-3" stroke="#888" stroke-width="1.6"/><circle r="3" fill="#4a9060" stroke="#333" stroke-width=".4"/></g>
<g transform="translate(1425 397)" fill="none"><path d="M-9-8C-2-8 5-4 6 2" stroke="#888" stroke-width="1.6"/><circle cx="0" cy="6" r="3" fill="#4aa040"/><path d="M2 6C5 6 7 4 7 2" stroke="#555"/></g>
<g transform="translate(1425 422)" fill="none"><rect x="-3" y="-5" width="5" height="5" fill="#4aa060" stroke="#336"/><path d="M-8-6L-3-3M2-2C5 1 7 4 8 0M-1 1C-1 6 5 7 6 3" stroke="#666" stroke-width="1.2"/></g>
<g transform="translate(1425 448)"><path d="M-8 3L-3 6L-5 0L0 3M2 0L7-2L4-6L9-6" stroke="#e02030" stroke-width="2" fill="none"/><circle r="2.2" cx="-1" cy="2" fill="#4a9060"/></g>
<circle cx="1422" cy="471" r="2" fill="#3a9a50" stroke="#333" stroke-width=".5"/>
<path d="M1418 497H1428M1423 492V502" stroke="#333" stroke-width="2"/>
<g transform="translate(1425 536)"><rect x="-6" y="-8" width="12" height="15" fill="url(#gG)" stroke="#222" stroke-width="1.3"/></g>
<path d="M1417 557H1434M1417 562H1434M1417 567H1434M1417 572H1434M1419 554V574M1424 554V574M1429 554V574M1433 554V574" stroke="#1a1aff" stroke-width="1.1"/>
<path d="M1420 581V598M1431 581L1425 598M1433 581V598" stroke="#3344ff" stroke-width="1.4"/>
<!-- scroll arrows -->
<g fill="#111"><path d="M56 797.5L60.5 794V801ZM1377 797.5L1372.5 794V801ZM1393.5 144L1390 149H1397ZM1393.5 785L1390 780H1397ZM5 834L9.5 830.500V837.500ZM1421 834L1416.500 830.500V837.500Z"/></g>
<path d="M1004 793V802M1006 793V802M1008 793V802M1002 793V802M1000 793V802M868 830V839M866 830V839M864 830V839M870 830V839M872 830V839M1388 436H1399M1388 438H1399M1388 440H1399M1388 442H1399M1388 444H1399M1388 446H1399" stroke="#9a9996"/>
<path d="M1390 793L1399 798L1390 803Z" fill="#9ab" stroke="#6a8" stroke-width=".6"/>
<path d="M1436 808L1432 812L1436 816Z" fill="#111"/>
<!-- status icons -->
<g transform="translate(192 855)"><circle r="3.500" fill="#222"/><path d="M-6-3L-4-1M-3-6L-2-3M3-6L2-3M6-3L4-1M-6 3L-3 2M6 3L3 2" stroke="#444"/></g>
<g transform="translate(210 856)"><path d="M-3-2V-4C-3-8 3-8 3-5" fill="none" stroke="#776633"/><rect x="-4" y="-2" width="8" height="7" rx="1" fill="#f6e8b0" stroke="#776633" stroke-width=".8"/></g>
<path d="M288 852H300L294 858Z" fill="#111"/>
<use href="#sp" transform="translate(172 856) scale(.8)"/><use href="#sp" transform="translate(1414 855) scale(.85)"/>
<path d="M1428 868L1439 857M1432 868L1439 861M1436 868L1439 865" stroke="#aaa"/>
<text x="1390" y="132" font-family="'DejaVu Sans',sans-serif" font-size="11" fill="#555">1</text>
</svg>
</body></html>
